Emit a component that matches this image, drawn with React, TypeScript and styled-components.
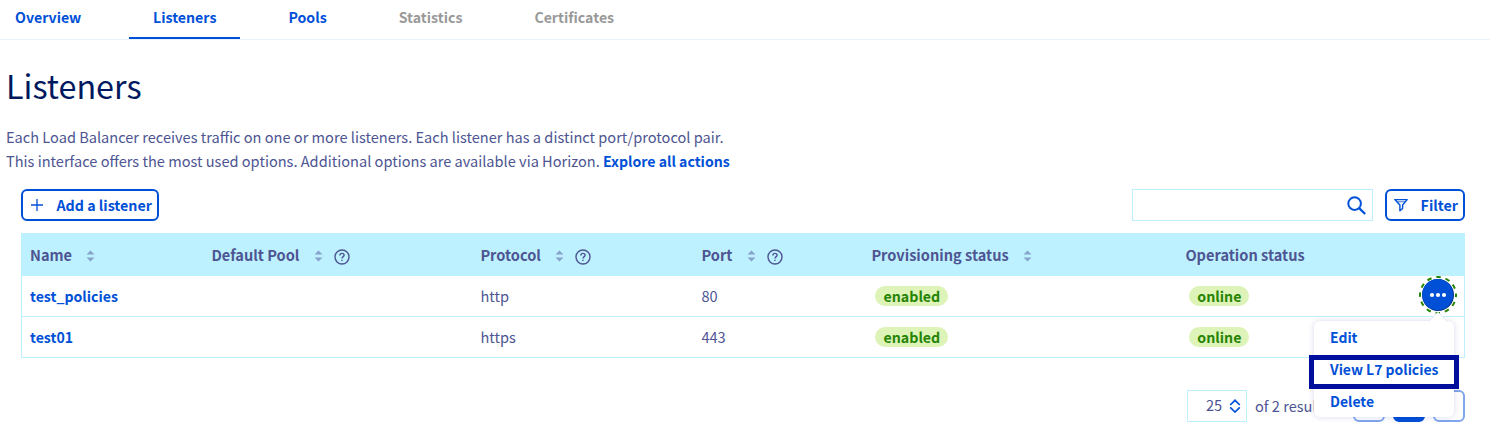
import React from "react";
import styled, { createGlobalStyle } from "styled-components";

const blue = "#0050d7";
const text = "#4d5592";
const line = "#bef1ff";

const GlobalStyle = createGlobalStyle`
  * { box-sizing: border-box; }
  body {
    margin: 0;
    background: #fff;
    color: ${text};
    font-family: "Noto Sans CJK JP", "Noto Sans", sans-serif;
    font-size: 14.58px;
    line-height: 24px;
    white-space: nowrap;
    overflow: hidden;
  }
`;

const Page = styled.main`
  height: 433px;
  overflow: hidden;
`;

const Tabs = styled.nav`
  display: flex;
  height: 40px;
  padding-left: 15px;
  border-bottom: 1px solid #e8f2fb;
`;

const Tab = styled.a<{ $width: number; $active?: boolean; $disabled?: boolean }>`
  flex: none;
  width: ${(p) => p.$width + 48}px;
  height: 39px;
  margin-right: 24px;
  padding: 5px 24px 0;
  font-size: 14.15px;
  font-weight: 700;
  color: ${(p) => (p.$disabled ? "#999" : blue)};
  border-bottom: 2px solid ${(p) => (p.$active ? blue : "transparent")};

  &:first-child {
    margin-left: -24px;
  }
`;

const Title = styled.h1`
  margin: 25px 0 0 6px;
  font-size: 32.3px;
  line-height: 40px;
  font-weight: 400;
  color: #00185e;
`;

const Description = styled.p`
  margin: 20px 0 0 6px;
`;

const Link = styled.a`
  color: ${blue};
  font-size: 14.1px;
  font-weight: 700;
`;

const Toolbar = styled.div`
  display: flex;
  align-items: center;
  gap: 12px;
  height: 32px;
  margin: 16px 25px 12px 21px;
`;

const Button = styled.button<{ $width: number }>`
  display: flex;
  align-items: center;
  justify-content: space-between;
  width: ${(p) => p.$width}px;
  height: 32px;
  padding: 0 5px 0 7px;
  border: 2px solid ${blue};
  border-radius: 6px;
  background: #fff;
  color: ${blue};
  font: inherit;
  font-size: 14.25px;
  font-weight: 700;
`;

const Search = styled.div`
  display: flex;
  align-items: center;
  justify-content: flex-end;
  width: 241px;
  height: 32px;
  margin-left: auto;
  padding-right: 6px;
  border: 1px solid ${line};
`;

const Table = styled.div`
  width: 1444px;
  margin-left: 21px;
  border: 1px solid ${line};
  border-top: 0;
`;

const Row = styled.div`
  display: grid;
  grid-template-columns: 181.4px 269px 221px 170px 314px 1fr;
  align-items: center;
  height: 41px;
  border-bottom: 1px solid ${line};

  &:last-child {
    height: 40px;
    border-bottom: 0;
  }
`;

const HeaderRow = styled(Row)`
  height: 43px;
  padding-top: 2px;
  background: ${line};
  font-weight: 700;
`;

const Cell = styled.div`
  display: flex;
  align-items: center;
  padding-left: 8px;
`;

const Badge = styled.span<{ $width: number }>`
  width: ${(p) => p.$width}px;
  height: 20px;
  margin-left: 4px;
  border-radius: 10px;
  background: #ddf3b8;
  color: #268403;
  font-size: 14.2px;
  font-weight: 700;
  line-height: 20px;
  text-align: center;
`;

const Label = styled.span<{ $width: number }>`
  width: ${(p) => p.$width}px;
`;

const ActionCell = styled(Cell)`
  position: relative;
`;

const ActionAnchor = styled.div`
  position: absolute;
  right: 7px;
  top: 50%;
  width: 38px;
  height: 38px;
  margin-top: -20px;
`;

const Menu = styled.div`
  position: absolute;
  z-index: 2;
  top: 45px;
  right: 3px;
  width: 140px;
  height: 96px;
  border-radius: 6px;
  background: #fff;
  box-shadow: 0 0 6px rgba(0, 14, 156, 0.16);
`;

const MenuArrow = styled.svg`
  position: absolute;
  top: -9px;
  right: 6px;
`;

const MenuItem = styled.a`
  display: block;
  height: 32px;
  padding: 4px 16px;
  color: ${blue};
  font-size: 13.95px;
  font-weight: 700;
`;

const Highlight = styled.div`
  position: absolute;
  top: 34px;
  left: -5px;
  width: 150px;
  height: 34px;
  border: 5px solid #000e9c;
`;

const Footer = styled.footer`
  display: flex;
  align-items: center;
  height: 32px;
  margin: 32px 25px 0 1187px;
`;

const PageSize = styled.div`
  display: flex;
  align-items: center;
  justify-content: space-between;
  width: 60px;
  height: 32px;
  margin-right: 8px;
  padding: 0 5px 2px 18px;
  border: 1px solid ${line};
`;

const Pager = styled.div`
  display: flex;
  gap: 8px;
  margin-left: auto;
`;

const PageButton = styled.span<{ $current?: boolean }>`
  width: 32px;
  height: 32px;
  border: 2px solid ${(p) => (p.$current ? blue : "#7fa7eb")};
  border-radius: 6px;
  background: ${(p) => (p.$current ? blue : "#fff")};
`;

const SortSvg = styled.svg`
  margin-top: 1px;
`;

const SortIcon = () => (
  <SortSvg width="9" height="12" viewBox="0 0 9 12" fill="#85a3cb">
    <path d="M0.5 4.6 4.5 0.4 8.5 4.6ZM0.5 7.4 4.5 11.6 8.5 7.4Z" />
  </SortSvg>
);

const HelpSvg = styled.svg`
  margin: 3px 0 0 11px;
`;

const HelpIcon = () => (
  <HelpSvg width="16" height="16" viewBox="0 0 16 16" fill="none" stroke={text} strokeWidth="1.4">
    <circle cx="8" cy="8" r="7" />
    <path d="M5.9 6.5C5.9 5.2 6.8 4.4 8 4.4S10.1 5.2 10.1 6.3C10.1 7.6 8 7.8 8 9.6" />
    <path d="M8 10.7V12.1" />
  </HelpSvg>
);

const PlusIcon = () => (
  <svg width="14" height="14" viewBox="0 0 14 14" stroke={blue} strokeWidth="1.3">
    <path d="M7 1V13M1 7H13" />
  </svg>
);

const FunnelIcon = () => (
  <svg width="14" height="14" viewBox="0 0 14 14" fill="none" stroke={blue} strokeWidth="1.4" strokeLinejoin="round">
    <path d="M0.8 1.6H13.2L8.6 7V10.4L5.9 12.8V7Z" />
    <path d="M3 3.8H11" strokeWidth="0.8" />
  </svg>
);

const SearchIcon = () => (
  <svg width="19" height="19" viewBox="0 0 19 19" fill="none" stroke={blue} strokeWidth="2">
    <circle cx="7.6" cy="7.6" r="6.3" />
    <path d="M12.1 12.1 18.2 18" strokeWidth="2.2" />
  </svg>
);

const ChevronsSvg = styled.svg`
  margin-top: 2px;
`;

const ChevronsIcon = () => (
  <ChevronsSvg width="12" height="14" viewBox="0 0 12 14" fill="none" stroke={blue} strokeWidth="1.7">
    <path d="M1.2 6 6 1.3 10.8 6M1.2 8.4 6 13 10.8 8.4" />
  </ChevronsSvg>
);

const ActionsIcon = () => (
  <svg width="38" height="38" viewBox="0 0 38 38">
    <circle cx="19" cy="19" r="16" fill="#00358f" />
    <circle cx="18.6" cy="18.5" r="15.4" fill={blue} />
    <circle
      cx="19" cy="19" r="18" fill="none" stroke="#268403" strokeWidth="2"
      strokeDasharray="4.6 4.825" strokeDashoffset="2.3"
    />
    <g fill="#fff">
      <circle cx="13" cy="19" r="2.1" />
      <circle cx="19" cy="19" r="2.1" />
      <circle cx="25" cy="19" r="2.1" />
    </g>
  </svg>
);

const tabs = [
  { name: "Overview", width: 66 },
  { name: "Listeners", width: 63.4, active: true },
  { name: "Pools", width: 38.3 },
  { name: "Statistics", width: 63.7, disabled: true },
  { name: "Certificates", width: 80, disabled: true },
];

const columns = [
  { name: "Name", width: 56, sort: true },
  { name: "Default Pool", width: 103, sort: true, help: true },
  { name: "Protocol", width: 75, sort: true, help: true },
  { name: "Port", width: 46, sort: true, help: true },
  { name: "Provisioning status", width: 152, sort: true },
  { name: "Operation status", width: 130 },
];

const listeners = [
  { name: "test_policies", protocol: "http", port: 80, open: true },
  { name: "test01", protocol: "https", port: 443 },
];

export default function App() {
  return (
    <Page>
      <GlobalStyle />
      <Tabs>
        {tabs.map((t) => (
          <Tab key={t.name} $width={t.width} $active={t.active} $disabled={t.disabled}>
            {t.name}
          </Tab>
        ))}
      </Tabs>
      <Title>Listeners</Title>
      <Description>
        Each Load Balancer receives traffic on one or more listeners. Each listener has a distinct port/protocol pair.
        <br />
        This interface offers the most used options. Additional options are available via Horizon.{" "}
        <Link>Explore all actions</Link>
      </Description>
      <Toolbar>
        <Button $width={138}>
          <PlusIcon />
          Add a listener
        </Button>
        <Search>
          <SearchIcon />
        </Search>
        <Button $width={80}>
          <FunnelIcon />
          Filter
        </Button>
      </Toolbar>
      <Table>
        <HeaderRow>
          {columns.map((c) => (
            <Cell key={c.name}>
              <Label $width={c.width}>{c.name}</Label>
              {c.sort && <SortIcon />}
              {c.help && <HelpIcon />}
            </Cell>
          ))}
        </HeaderRow>
        {listeners.map((l) => (
          <Row key={l.name}>
            <Cell>
              <Link>{l.name}</Link>
            </Cell>
            <Cell />
            <Cell>{l.protocol}</Cell>
            <Cell>{l.port}</Cell>
            <Cell>
              <Badge $width={73}>enabled</Badge>
            </Cell>
            <ActionCell>
              <Badge $width={60}>online</Badge>
              {l.open && (
                <ActionAnchor>
                  <ActionsIcon />
                  <Menu>
                    <MenuArrow width="20" height="10" viewBox="0 0 20 10">
                      <path d="M0 10 10 0 20 10Z" fill="#fff" />
                      <path d="M0.5 9.5 10 0.5 19.5 9.5" fill="none" stroke="#e4e6f5" />
                    </MenuArrow>
                    <MenuItem>Edit</MenuItem>
                    <MenuItem>View L7 policies</MenuItem>
                    <MenuItem>Delete</MenuItem>
                    <Highlight />
                  </Menu>
                </ActionAnchor>
              )}
            </ActionCell>
          </Row>
        ))}
      </Table>
      <Footer>
        <PageSize>
          25
          <ChevronsIcon />
        </PageSize>
        of 2 results
        <Pager>
          <PageButton />
          <PageButton $current />
          <PageButton />
        </Pager>
      </Footer>
    </Page>
  );
}
